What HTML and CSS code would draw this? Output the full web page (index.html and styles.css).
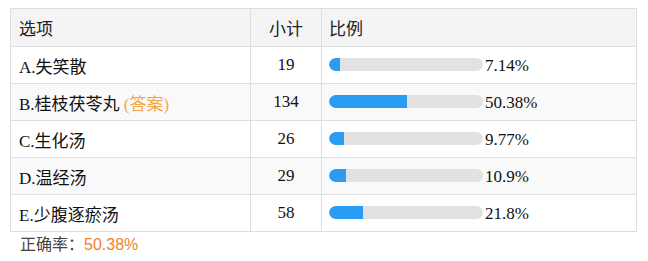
FILE: index.html
```html
<!DOCTYPE html>
<html lang="zh">
<head>
<meta charset="utf-8">
<link rel="stylesheet" href="styles.css">
</head>
<body>
<table class="stats">
  <colgroup>
    <col class="c-opt"><col class="c-cnt"><col class="c-pct">
  </colgroup>
  <thead>
    <tr><th class="opt">选项</th><th class="cnt">小计</th><th class="pct">比例</th></tr>
  </thead>
  <tbody>
    <tr><td class="opt">A.失笑散</td><td class="cnt">19</td><td class="pct"><span class="bar"><span class="fill" style="width:7.14%"></span></span><span class="val">7.14%</span></td></tr>
    <tr><td class="opt">B.桂枝茯苓丸 <span class="ans">(答案)</span></td><td class="cnt">134</td><td class="pct"><span class="bar"><span class="fill" style="width:50.38%"></span></span><span class="val">50.38%</span></td></tr>
    <tr><td class="opt">C.生化汤</td><td class="cnt">26</td><td class="pct"><span class="bar"><span class="fill" style="width:9.77%"></span></span><span class="val">9.77%</span></td></tr>
    <tr><td class="opt">D.温经汤</td><td class="cnt">29</td><td class="pct"><span class="bar"><span class="fill" style="width:10.9%"></span></span><span class="val">10.9%</span></td></tr>
    <tr><td class="opt">E.少腹逐瘀汤</td><td class="cnt">58</td><td class="pct"><span class="bar"><span class="fill" style="width:21.8%"></span></span><span class="val">21.8%</span></td></tr>
  </tbody>
</table>
<div class="rate">正确率：<span class="rate-val">50.38%</span></div>
</body>
</html>
```
FILE: styles.css
```css
html, body {
  margin: 0;
  padding: 0;
  background: #fff;
}
body {
  padding: 8px 0 0 10px;
  font-family: "Liberation Serif", "Noto Sans CJK SC", serif;
  font-size: 17px;
  color: #111;
}
.stats {
  border-collapse: collapse;
  width: 626px;
  table-layout: fixed;
}
.c-opt { width: 240px; }
.c-cnt { width: 71px; }
.c-pct { width: 315px; }
.stats th, .stats td {
  border: 1px solid #dedede;
  padding: 0 8px;
  text-align: left;
  font-weight: normal;
  vertical-align: middle;
  white-space: nowrap;
}
.stats th {
  height: 37px;
  background: #f4f4f4;
  color: #222;
}
.stats td {
  height: 36px;
}
.stats tbody tr:nth-child(even) td {
  background: #f9f9f9;
}
.stats .cnt {
  text-align: center;
}
.stats th.pct, .stats td.pct {
  padding-left: 7px;
}
.ans {
  color: #f2a54a;
}
.bar {
  display: inline-block;
  vertical-align: middle;
  width: 154px;
  height: 13px;
  border-radius: 7px;
  background: #e2e2e2;
  overflow: hidden;
  position: relative;
  top: -1px;
}
.fill {
  display: block;
  height: 100%;
  background: #2a9cf4;
  border-radius: 7px 0 0 7px;
}
.val {
  vertical-align: middle;
  margin-left: 2px;
}
.rate {
  padding: 1px 0 0 10px;
  font-family: "Liberation Sans", "Noto Sans CJK SC", sans-serif;
  font-size: 16px;
  color: #444;
  line-height: 24px;
}
.rate-val {
  color: #f0802a;
}
```
